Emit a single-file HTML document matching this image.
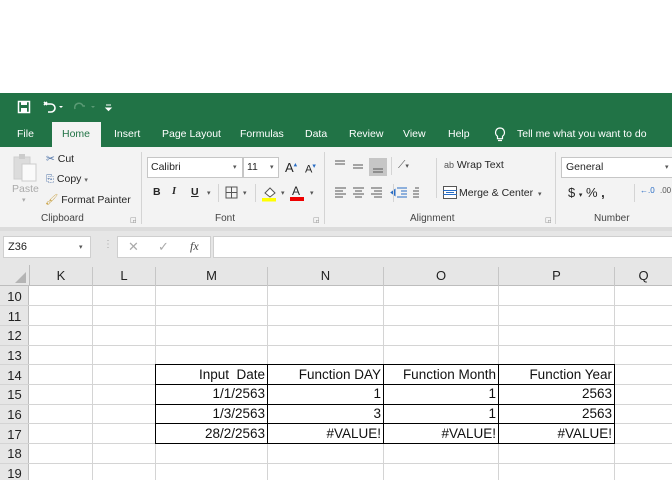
<!DOCTYPE html>
<html><head><meta charset="utf-8"><style>
*{margin:0;padding:0;box-sizing:border-box}
body{width:672px;height:480px;position:relative;overflow:hidden;background:#fff;font-family:"Liberation Sans",sans-serif}
.a{position:absolute;white-space:nowrap}
.g{background:#217346}
.tab{color:#fff;font-size:10.5px;top:128px}
.rb{font-size:10.5px;color:#262626}
.lbl{font-size:10px;color:#444;top:213px}
.sep{background:#d4d4d4;width:1px;top:152px;height:72px}
.vl{background:#d4d4d4;width:1px}
.hl{background:#d4d4d4;height:1px}
.ch{font-size:13px;color:#222;top:268px;text-align:center}
.rh{font-size:13px;color:#222;left:0;width:29px;text-align:center}
.c{font-size:13.5px;color:#111;text-align:right;font-family:"Liberation Sans",sans-serif}
</style></head><body>
<div class="a g" style="left:0;top:93px;width:672px;height:54px"></div>
<svg class="a" style="left:17px;top:99px" width="100" height="16" viewBox="0 0 100 16">
<rect x="1.5" y="2.5" width="11" height="11" fill="none" stroke="#fff" stroke-width="1.5"/><rect x="4" y="3" width="6" height="3" fill="#fff"/><rect x="4" y="9" width="6" height="4" fill="#fff"/>
<path d="M30 6 l-3 -3 M27 6 l3 -3 M28 5 h6 a4 4 0 0 1 0 8 h-3" fill="none" stroke="#fff" stroke-width="1.6"/>
<path d="M42 7 l2 2 l2 -2z" fill="#fff"/>
<path d="M58 10 a4 4 0 0 1 8 -3 h2" fill="none" stroke="#5a9a74" stroke-width="1.5"/>
<path d="M74 7 l2 2 l2 -2z" fill="#5a9a74"/>
<path d="M89 6 h5 M89 9 l2.5 2.5 l2.5 -2.5z" stroke="#fff" fill="#fff"/>
</svg>
<div class="a" style="left:52px;top:122px;width:49px;height:26px;background:#f3f3f3"></div>
<div class="a tab" style="left:17px">File</div>
<div class="a tab" style="left:62px;color:#217346">Home</div>
<div class="a tab" style="left:114px">Insert</div>
<div class="a tab" style="left:162px">Page Layout</div>
<div class="a tab" style="left:240px">Formulas</div>
<div class="a tab" style="left:305px">Data</div>
<div class="a tab" style="left:349px">Review</div>
<div class="a tab" style="left:403px">View</div>
<div class="a tab" style="left:448px">Help</div>
<svg class="a" style="left:494px;top:127px" width="12" height="16"><path d="M6 1 a4.5 4.5 0 0 0 -2.5 8.2 v2.5 h5 v-2.5 A4.5 4.5 0 0 0 6 1z M4 13.5 h4" fill="none" stroke="#fff" stroke-width="1.2"/></svg>
<div class="a tab" style="left:517px">Tell me what you want to do</div>
<div class="a" style="left:0;top:147px;width:672px;height:80px;background:#f3f3f3"></div>
<div class="a" style="left:0;top:227px;width:672px;height:38px;background:#e6e6e6"></div>
<div class="a" style="left:0;top:227px;width:672px;height:4px;background:#dcdcdc"></div>
<svg class="a" style="left:13px;top:153px" width="26" height="30"><rect x="1" y="4" width="16" height="22" fill="#dcdcdc" stroke="#cfcfcf"/><rect x="6" y="1" width="6" height="5" fill="#ccc"/><rect x="9" y="11" width="14" height="17" fill="#fafafa" stroke="#ccc"/></svg>
<div class="a" style="left:12px;top:183px;font-size:10.5px;color:#aaa">Paste</div>
<div class="a" style="left:22px;top:196px;font-size:7px;color:#aaa">▾</div>
<div class="a rb" style="left:46px;top:153px"><span style="color:#4a6fa5">✂</span> Cut</div>
<div class="a rb" style="left:46px;top:173px"><span style="color:#4a6fa5;font-size:10px">⎘</span> Copy <span style="font-size:7px;color:#666">▾</span></div>
<div class="a rb" style="left:45px;top:193px"><span style="color:#c8a040">🖌</span> Format Painter</div>
<div class="a lbl" style="left:41px">Clipboard</div>
<div class="a" style="left:130px;top:216px;font-size:7px;color:#888">◲</div>
<div class="a sep" style="left:141px"></div>
<div class="a" style="left:147px;top:157px;width:96px;height:21px;background:#fff;border:1px solid #c6c6c6"></div>
<div class="a rb" style="left:151px;top:161px">Calibri</div>
<div class="a" style="left:233px;top:163px;font-size:7px;color:#555">▾</div>
<div class="a" style="left:243px;top:157px;width:36px;height:21px;background:#fff;border:1px solid #c6c6c6"></div>
<div class="a rb" style="left:247px;top:161px">11</div>
<div class="a" style="left:270px;top:163px;font-size:7px;color:#555">▾</div>
<div class="a rb" style="left:285px;top:160px;font-size:13px">A<sup style="font-size:7px;color:#2a6dc4">▴</sup></div>
<div class="a rb" style="left:305px;top:162px;font-size:11px">A<sup style="font-size:7px;color:#2a6dc4">▾</sup></div>
<div class="a rb" style="left:153px;top:186px;font-weight:bold">B</div>
<div class="a rb" style="left:172px;top:186px;font-style:italic;font-family:'Liberation Serif';font-weight:bold">I</div>
<div class="a rb" style="left:191px;top:186px;text-decoration:underline;font-weight:bold">U</div>
<div class="a" style="left:207px;top:189px;font-size:7px;color:#555">▾</div>
<div class="a vl" style="left:218px;top:184px;height:18px"></div>
<svg class="a" style="left:225px;top:186px" width="14" height="14"><rect x="1" y="1" width="11" height="11" fill="none" stroke="#555"/><path d="M6.5 1v11M1 6.5h11" stroke="#555"/></svg>
<div class="a" style="left:243px;top:189px;font-size:7px;color:#555">▾</div>
<div class="a vl" style="left:255px;top:184px;height:18px"></div>
<svg class="a" style="left:261px;top:184px" width="16" height="18"><path d="M4 9 l5 -5 l5 5 l-5 4z" fill="#fff" stroke="#555"/><rect x="1" y="14" width="14" height="3.5" fill="#ffff00"/></svg>
<div class="a" style="left:281px;top:189px;font-size:7px;color:#555">▾</div>
<div class="a rb" style="left:292px;top:184px;font-size:12px">A</div>
<div class="a" style="left:290px;top:197px;width:14px;height:4px;background:#e00"></div>
<div class="a" style="left:310px;top:189px;font-size:7px;color:#555">▾</div>
<div class="a lbl" style="left:215px">Font</div>
<div class="a" style="left:313px;top:216px;font-size:7px;color:#888">◲</div>
<div class="a sep" style="left:324px"></div>
<svg class="a" style="left:333px;top:158px" width="60" height="18"><path d="M2 3h10M2 6h10 M20 7h10M20 10h10" stroke="#555"/><rect x="36" y="0" width="18" height="18" fill="#c6c6c6"/><path d="M40 11h10M40 14h10" stroke="#555"/></svg>
<div class="a vl" style="left:391px;top:157px;height:18px"></div>
<div class="a rb" style="left:398px;top:159px;color:#555">⟋<span style="font-size:7px">▾</span></div>
<svg class="a" style="left:333px;top:185px" width="90" height="16"><path d="M2 3h11M2 6h8M2 9h11M2 12h8 M20 3h11M22 6h7M20 9h11M22 12h7 M38 3h11M41 6h8M38 9h11M41 12h8" stroke="#555"/><path d="M64 3h10M68 6h6M68 9h6M64 12h10 M58 7.5l4 -3v6z" stroke="#2a6dc4" fill="#2a6dc4"/><path d="M86 3h-4M80 6h6M80 9h6M80 12h6" stroke="#555"/></svg>
<div class="a vl" style="left:393px;top:184px;height:18px"></div>
<div class="a sep" style="left:436px;top:158px;height:40px"></div>
<div class="a rb" style="left:444px;top:159px"><span style="font-size:9px;color:#555">ab</span> Wrap Text</div>
<svg class="a" style="left:443px;top:186px" width="14" height="13"><rect x="0.5" y="0.5" width="13" height="12" fill="#fff" stroke="#555"/><path d="M0 4.5h14M0 8.5h14M3 6.5h8" stroke="#2a6dc4"/></svg>
<div class="a rb" style="left:459px;top:187px">Merge &amp; Center <span style="font-size:7px;color:#555">&nbsp;▾</span></div>
<div class="a lbl" style="left:410px">Alignment</div>
<div class="a" style="left:545px;top:216px;font-size:7px;color:#888">◲</div>
<div class="a sep" style="left:555px"></div>
<div class="a" style="left:561px;top:157px;width:120px;height:21px;background:#fff;border:1px solid #c6c6c6"></div>
<div class="a rb" style="left:566px;top:161px">General</div>
<div class="a" style="left:665px;top:163px;font-size:7px;color:#555">▾</div>
<div class="a rb" style="left:568px;top:185px;font-size:13px">$ <span style="font-size:7px">▾</span> % <b>,</b></div>
<div class="a vl" style="left:634px;top:184px;height:18px"></div>
<div class="a" style="left:640px;top:186px;font-size:8px;color:#2a6dc4">←.0</div>
<div class="a" style="left:660px;top:186px;font-size:8px;color:#555">.00</div>
<div class="a lbl" style="left:594px">Number</div>
<div class="a" style="left:3px;top:236px;width:88px;height:22px;background:#fff;border:1px solid #cfcfcf"></div>
<div class="a" style="left:8px;top:241px;font-size:11px;color:#222">Z36</div>
<div class="a" style="left:79px;top:243px;font-size:7px;color:#555">▾</div>
<div class="a" style="left:103px;top:239px;font-size:10px;color:#aaa">⋮</div>
<div class="a" style="left:117px;top:236px;width:94px;height:22px;background:#fff;border:1px solid #cfcfcf"></div>
<div class="a" style="left:128px;top:239px;font-size:13px;color:#aaa">✕</div>
<div class="a" style="left:158px;top:239px;font-size:13px;color:#aaa">✓</div>
<div class="a" style="left:190px;top:239px;font-size:12px;color:#444;font-style:italic;font-family:'Liberation Serif'">fx</div>
<div class="a" style="left:213px;top:236px;width:462px;height:22px;background:#fff;border:1px solid #cfcfcf"></div>
<div class="a" style="left:0;top:265px;width:672px;height:21px;background:#e6e6e6;border-bottom:1px solid #bdbdbd"></div>
<div class="a" style="left:0;top:286px;width:29px;height:194px;background:#e6e6e6;border-right:1px solid #bdbdbd"></div>
<svg class="a" style="left:13px;top:270px" width="14" height="14"><path d="M13 2 L13 13 L2 13z" fill="#b4b4b4"/></svg>
<div class="a vl" style="left:29px;top:265px;height:21px;background:#bdbdbd"></div>
<div class="a vl" style="left:92px;top:267px;height:19px;background:#c6c6c6"></div>
<div class="a vl" style="left:155px;top:267px;height:19px;background:#c6c6c6"></div>
<div class="a vl" style="left:267px;top:267px;height:19px;background:#c6c6c6"></div>
<div class="a vl" style="left:383px;top:267px;height:19px;background:#c6c6c6"></div>
<div class="a vl" style="left:498px;top:267px;height:19px;background:#c6c6c6"></div>
<div class="a vl" style="left:614px;top:267px;height:19px;background:#c6c6c6"></div>
<div class="a ch" style="left:30px;width:62px">K</div>
<div class="a ch" style="left:93px;width:62px">L</div>
<div class="a ch" style="left:156px;width:111px">M</div>
<div class="a ch" style="left:268px;width:115px">N</div>
<div class="a ch" style="left:384px;width:114px">O</div>
<div class="a ch" style="left:499px;width:115px">P</div>
<div class="a ch" style="left:615px;width:57px">Q</div>
<div class="a vl" style="left:92px;top:286px;height:194px"></div>
<div class="a vl" style="left:155px;top:286px;height:194px"></div>
<div class="a vl" style="left:267px;top:286px;height:194px"></div>
<div class="a vl" style="left:383px;top:286px;height:194px"></div>
<div class="a vl" style="left:498px;top:286px;height:194px"></div>
<div class="a vl" style="left:614px;top:286px;height:194px"></div>
<div class="a hl" style="left:0;top:305px;width:672px"></div>
<div class="a hl" style="left:0;top:325px;width:672px"></div>
<div class="a hl" style="left:0;top:345px;width:672px"></div>
<div class="a hl" style="left:0;top:364px;width:672px"></div>
<div class="a hl" style="left:0;top:384px;width:672px"></div>
<div class="a hl" style="left:0;top:404px;width:672px"></div>
<div class="a hl" style="left:0;top:423px;width:672px"></div>
<div class="a hl" style="left:0;top:443px;width:672px"></div>
<div class="a hl" style="left:0;top:463px;width:672px"></div>
<div class="a rh" style="top:289px">10</div>
<div class="a rh" style="top:309px">11</div>
<div class="a rh" style="top:328px">12</div>
<div class="a rh" style="top:348px">13</div>
<div class="a rh" style="top:368px">14</div>
<div class="a rh" style="top:387px">15</div>
<div class="a rh" style="top:407px">16</div>
<div class="a rh" style="top:427px">17</div>
<div class="a rh" style="top:446px">18</div>
<div class="a rh" style="top:466px">19</div>
<div class="a" style="left:155px;top:364px;width:460px;height:80px;border:1px solid #000"></div>
<div class="a" style="left:155px;top:384px;width:460px;height:1px;background:#000"></div>
<div class="a" style="left:155px;top:404px;width:460px;height:1px;background:#000"></div>
<div class="a" style="left:155px;top:423px;width:460px;height:1px;background:#000"></div>
<div class="a" style="left:267px;top:364px;width:1px;height:80px;background:#000"></div>
<div class="a" style="left:383px;top:364px;width:1px;height:80px;background:#000"></div>
<div class="a" style="left:498px;top:364px;width:1px;height:80px;background:#000"></div>
<div class="a c" style="left:156px;width:109px;top:367px">Input&nbsp; Date</div>
<div class="a c" style="left:268px;width:113px;top:367px">Function DAY</div>
<div class="a c" style="left:384px;width:112px;top:367px">Function Month</div>
<div class="a c" style="left:499px;width:113px;top:367px">Function Year</div>
<div class="a c" style="left:156px;width:109px;top:386px">1/1/2563</div>
<div class="a c" style="left:268px;width:113px;top:386px">1</div>
<div class="a c" style="left:384px;width:112px;top:386px">1</div>
<div class="a c" style="left:499px;width:113px;top:386px">2563</div>
<div class="a c" style="left:156px;width:109px;top:406px">1/3/2563</div>
<div class="a c" style="left:268px;width:113px;top:406px">3</div>
<div class="a c" style="left:384px;width:112px;top:406px">1</div>
<div class="a c" style="left:499px;width:113px;top:406px">2563</div>
<div class="a c" style="left:156px;width:109px;top:426px">28/2/2563</div>
<div class="a c" style="left:268px;width:113px;top:426px">#VALUE!</div>
<div class="a c" style="left:384px;width:112px;top:426px">#VALUE!</div>
<div class="a c" style="left:499px;width:113px;top:426px">#VALUE!</div>
</body></html>
